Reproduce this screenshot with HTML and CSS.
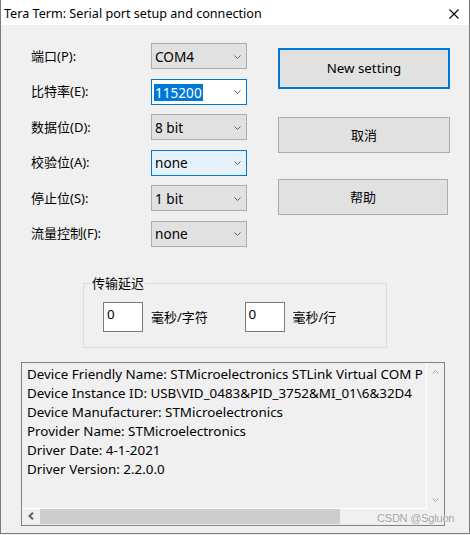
FILE: index.html
```html
<!DOCTYPE html>
<html>
<head>
<meta charset="utf-8">
<link rel="stylesheet" href="styles.css">
</head>
<body>
<div class="window">
  <div class="titlebar">
    <span class="title">Tera Term: Serial port setup and connection</span>
    <svg class="close" width="10" height="10" viewBox="0 0 10 10"><path d="M0.5 0.5 L9.5 9.5 M9.5 0.5 L0.5 9.5" stroke="#000" stroke-width="1.1" fill="none"/></svg>
  </div>
  <div class="content">
    <div class="top">
      <div class="form">
        <span class="lbl">端口(P):</span>
        <div class="combo"><span class="val">COM4</span><svg class="chev" width="7" height="4" viewBox="0 0 7 4"><path d="M0.5 0.5 L3.5 3.5 L6.5 0.5" stroke="#606060" fill="none"/></svg></div>
        <span class="lbl">比特率(E):</span>
        <div class="combo focus"><span class="val sel">115200</span><svg class="chev" width="7" height="4" viewBox="0 0 7 4"><path d="M0.5 0.5 L3.5 3.5 L6.5 0.5" stroke="#606060" fill="none"/></svg></div>
        <span class="lbl">数据位(D):</span>
        <div class="combo"><span class="val">8 bit</span><svg class="chev" width="7" height="4" viewBox="0 0 7 4"><path d="M0.5 0.5 L3.5 3.5 L6.5 0.5" stroke="#606060" fill="none"/></svg></div>
        <span class="lbl">校验位(A):</span>
        <div class="combo hover"><span class="val">none</span><svg class="chev" width="7" height="4" viewBox="0 0 7 4"><path d="M0.5 0.5 L3.5 3.5 L6.5 0.5" stroke="#606060" fill="none"/></svg></div>
        <span class="lbl">停止位(S):</span>
        <div class="combo"><span class="val">1 bit</span><svg class="chev" width="7" height="4" viewBox="0 0 7 4"><path d="M0.5 0.5 L3.5 3.5 L6.5 0.5" stroke="#606060" fill="none"/></svg></div>
        <span class="lbl">流量控制(F):</span>
        <div class="combo"><span class="val">none</span><svg class="chev" width="7" height="4" viewBox="0 0 7 4"><path d="M0.5 0.5 L3.5 3.5 L6.5 0.5" stroke="#606060" fill="none"/></svg></div>
      </div>
      <div class="buttons">
        <div class="btn default">New setting</div>
        <div class="btn cancel">取消</div>
        <div class="btn help">帮助</div>
      </div>
    </div>
    <fieldset class="delay">
      <legend>传输延迟</legend>
      <div class="delay-row">
        <div class="delay-item"><div class="tbox">0</div><span class="unit">毫秒/字符</span></div>
        <div class="delay-item"><div class="tbox">0</div><span class="unit">毫秒/行</span></div>
      </div>
    </fieldset>
    <div class="listbox">
      <div class="list-text">
        <div class="line">Device Friendly Name: STMicroelectronics STLink Virtual COM P</div>
        <div class="line">Device Instance ID: USB\VID_0483&amp;PID_3752&amp;MI_01\6&amp;32D4</div>
        <div class="line">Device Manufacturer: STMicroelectronics</div>
        <div class="line">Provider Name: STMicroelectronics</div>
        <div class="line">Driver Date: 4-1-2021</div>
        <div class="line">Driver Version: 2.2.0.0</div>
      </div>
      <div class="vscroll">
        <svg width="7" height="4" viewBox="0 0 7 4"><path d="M0.5 3.5 L3.5 0.5 L6.5 3.5" stroke="#a8a8a8" fill="none"/></svg>
        <svg width="7" height="4" viewBox="0 0 7 4"><path d="M0.5 0.5 L3.5 3.5 L6.5 0.5" stroke="#a8a8a8" fill="none"/></svg>
      </div>
      <div class="hscroll">
        <div class="harrow"><svg width="6" height="8" viewBox="0 0 6 8"><path d="M5 0.8 L1.5 4 L5 7.2" stroke="#606060" stroke-width="2" fill="none"/></svg></div>
        <div class="thumb"></div>
      </div>
      <div class="corner"></div>
    </div>
  </div>
  <div class="watermark">CSDN @Sgluon</div>
</div>
</body>
</html>
```
FILE: styles.css
```css
html, body {
  margin: 0;
  padding: 0;
  background: #f0f0f0;
}
body {
  width: 470px;
  height: 535px;
  overflow: hidden;
  font-family: "Noto Sans", "Noto Sans CJK SC", sans-serif;
  color: #000;
}
.window {
  position: relative;
  width: 470px;
  height: 534px;
  box-sizing: border-box;
  border-left: 1px solid #7a7a7a;
  border-right: 1px solid #7a7a7a;
  border-bottom: 1px solid #7a7a7a;
  background: #f0f0f0;
}
.titlebar {
  height: 25px;
  background: #fff;
  display: flex;
  align-items: center;
  justify-content: space-between;
  padding-left: 3px;
  padding-right: 10px;
}
.title {
  font-size: 12.6px;
  line-height: 25px;
  padding-top: 1px;
}
.close {
  display: block;
  margin-top: 3px;
}
.content {
  padding-top: 18px;
}
.top {
  display: flex;
  align-items: flex-start;
}
.form {
  margin-left: 30px;
  display: grid;
  grid-template-columns: 120px 96px;
  grid-auto-rows: 26px;
  row-gap: 9.6px;
  align-items: center;
}
.lbl {
  font-size: 13px;
  line-height: 17px;
}
.combo {
  height: 26px;
  box-sizing: border-box;
  border: 1px solid #adadad;
  background: #e1e1e1;
  display: flex;
  align-items: center;
  justify-content: space-between;
  padding: 0 5px 0 3px;
}
.combo.focus {
  border-color: #0078d7;
  background: #fff;
}
.combo.hover {
  border-color: #0078d7;
  background: #e5f1fb;
}
.val {
  font-size: 13.6px;
  line-height: 17px;
}
.val.sel {
  background: #0078d7;
  color: #fff;
  padding: 0 1px;
  margin-left: -1px;
  margin-top: 1px;
}
.chev {
  display: block;
  margin-top: 1px;
}
.buttons {
  margin-left: 31px;
  padding-top: 5px;
  display: flex;
  flex-direction: column;
}
.btn {
  box-sizing: border-box;
  border: 1px solid #adadad;
  background: #e1e1e1;
  display: flex;
  align-items: center;
  justify-content: center;
  font-size: 13px;
  line-height: 17px;
  width: 172px;
  height: 36px;
}
.btn.default {
  height: 41px;
  border: 2px solid #0078d7;
  font-size: 13.3px;
}
.btn.cancel {
  margin-top: 28px;
}
.btn.help {
  margin-top: 26px;
  width: 170px;
}
.delay {
  margin: 28px 0 0 82px;
  width: 304px;
  box-sizing: border-box;
  border: 1px solid #dcdcdc;
  padding: 10px 0 15px 0;
  min-width: 0;
}
.delay legend {
  font-size: 13px;
  line-height: 17px;
  padding: 0 1px;
  margin-left: 7px;
}
.delay-row {
  display: flex;
  padding-left: 19px;
}
.delay-item {
  width: 142px;
  display: flex;
  align-items: center;
  gap: 8px;
}
.tbox {
  width: 40px;
  height: 30px;
  box-sizing: border-box;
  border: 1px solid #7a7a7a;
  background: #fff;
  font-size: 13.4px;
  line-height: 17px;
  padding: 3px 0 0 3px;
}
.unit {
  font-size: 13px;
  line-height: 17px;
  margin-top: 1px;
}
.listbox {
  margin: 14px 0 0 20px;
  width: 424px;
  height: 164px;
  box-sizing: border-box;
  border: 1px solid #828282;
  display: grid;
  grid-template-columns: 405px 17px;
  grid-template-rows: 146px 16px;
}
.list-text {
  box-sizing: border-box;
  border-right: 1px solid #fff;
  border-bottom: 1px solid #fff;
  padding: 2px 0 0 5px;
  overflow: hidden;
  white-space: nowrap;
  font-size: 13.4px;
  line-height: 19px;
}
.vscroll {
  display: flex;
  flex-direction: column;
  justify-content: space-between;
  align-items: center;
  padding: 7px 0 7px 0;
}
.vscroll svg {
  display: block;
}
.hscroll {
  display: flex;
  align-items: flex-start;
}
.harrow {
  width: 18px;
  height: 15px;
  display: flex;
  align-items: center;
  justify-content: center;
}
.harrow svg {
  display: block;
}
.thumb {
  width: 300px;
  height: 15px;
  background: #cdcdcd;
}
.corner {
  background: #f0f0f0;
}
.watermark {
  position: absolute;
  left: 376px;
  top: 510px;
  font-family: "Liberation Sans", sans-serif;
  font-size: 11px;
  line-height: 16px;
  color: #a0a0a0;
  text-shadow: 0 0 1px #fff, 0 0 2px #fff;
  letter-spacing: -0.2px;
}
```
